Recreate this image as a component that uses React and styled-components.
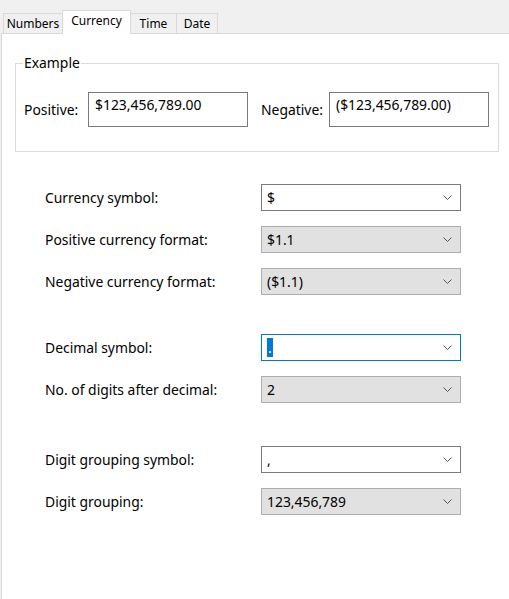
import React from "react";
import styled, { createGlobalStyle, css } from "styled-components";

const Global = createGlobalStyle`
  html, body { margin: 0; padding: 0; background: #f0f0f0; }
  body { font-family: "Noto Sans", "Open Sans", Arial, sans-serif; color: #000; }
  #root { width: 509px; height: 599px; overflow: hidden; }
`;

const Window = styled.div`
  width: 509px;
  height: 599px;
  display: flex;
  flex-direction: column;
  background: #f0f0f0;
`;

const TabStrip = styled.div`
  height: 33px;
  display: flex;
  align-items: flex-end;
  padding-left: 3px;
  box-sizing: border-box;
`;

const Tab = styled.div`
  box-sizing: border-box;
  width: ${(p) => p.$w}px;
  height: 20px;
  border: 1px solid #d9d9d9;
  border-bottom: none;
  border-left-width: ${(p) => (p.$first ? "1px" : "0")};
  background: #f0f0f0;
  font-size: 12px;
  line-height: 19px;
  text-align: center;
  white-space: nowrap;
  ${(p) =>
    p.$active &&
    css`
      height: 24px;
      margin-bottom: -1px;
      background: #fff;
      border-left-width: 1px;
      border-right-width: 1px;
      margin-left: -1px;
      line-height: 20px;
      position: relative;
      z-index: 1;
    `}
`;

const Panel = styled.div`
  flex: 1;
  margin-left: 1px;
  background: #fff;
  border-top: 1px solid #d9d9d9;
  border-left: 1px solid #d9d9d9;
  padding: 20px 0 0 13px;
  font-size: 13.9px;
`;

const GroupBox = styled.fieldset`
  width: 484px;
  box-sizing: border-box;
  height: 98px;
  margin: 0;
  padding: 20px 0 0 8px;
  border: 1px solid #dcdcdc;
  display: flex;
  align-items: flex-start;
`;

const Legend = styled.legend`
  padding: 0 1px;
  margin-left: -1px;
  font-size: 13.9px;
  line-height: 18px;
`;

const ExampleItem = styled.div`
  display: flex;
  align-items: center;
  margin-right: ${(p) => p.$gap || 0}px;
`;

const ExampleLabel = styled.div`
  width: ${(p) => p.$w}px;
  line-height: 20px;
`;

const SampleBox = styled.div`
  box-sizing: border-box;
  width: 160px;
  height: 35px;
  border: 1px solid #7a7a7a;
  padding: 2px 6px;
  line-height: 20px;
`;

const Section = styled.div`
  display: grid;
  grid-template-columns: 216px 200px;
  row-gap: ${(p) => p.$gap || 15}px;
  margin-top: ${(p) => p.$top}px;
  padding-left: 30px;
  align-items: center;
`;

const Label = styled.div`
  line-height: 20px;
`;

const Combo = styled.div`
  box-sizing: border-box;
  height: 27px;
  display: flex;
  align-items: center;
  justify-content: space-between;
  padding: 0 8px 0 5px;
  border: 1px solid #7a7a7a;
  background: #fff;
  line-height: 20px;
  ${(p) =>
    p.$variant === "grey" &&
    css`
      background: #e1e1e1;
      border-color: #adadad;
    `}
  ${(p) =>
    p.$variant === "focus" &&
    css`
      border-color: #0078d7;
    `}
`;

const Selected = styled.span`
  background: #0078d7;
  color: #fff;
  padding: 0 1px;
  line-height: 19px;
`;

const Chevron = () => (
  <svg width="9" height="5" viewBox="0 0 9 5" style={{ display: "block" }}>
    <polyline points="0.5,0.5 4.5,4.5 8.5,0.5" fill="none" stroke="#555" strokeWidth="1" />
  </svg>
);

const Row = ({ label, value, variant }) => (
  <>
    <Label>{label}</Label>
    <Combo $variant={variant}>
      <span>{value}</span>
      <Chevron />
    </Combo>
  </>
);

export default function App() {
  return (
    <Window>
      <Global />
      <TabStrip>
        <Tab $first $w={60}>Numbers</Tab>
        <Tab $active $w={69}>Currency</Tab>
        <Tab $w={46}>Time</Tab>
        <Tab $w={41}>Date</Tab>
      </TabStrip>
      <Panel>
        <GroupBox>
          <Legend>Example</Legend>
          <ExampleItem $gap={13}>
            <ExampleLabel $w={64}>Positive:</ExampleLabel>
            <SampleBox>$123,456,789.00</SampleBox>
          </ExampleItem>
          <ExampleItem>
            <ExampleLabel $w={68}>Negative:</ExampleLabel>
            <SampleBox>($123,456,789.00)</SampleBox>
          </ExampleItem>
        </GroupBox>

        <Section $top={32}>
          <Row label="Currency symbol:" value="$" />
          <Row label="Positive currency format:" value="$1.1" variant="grey" />
          <Row label="Negative currency format:" value="($1.1)" variant="grey" />
        </Section>

        <Section $top={39}>
          <Label>Decimal symbol:</Label>
          <Combo $variant="focus">
            <Selected>.</Selected>
            <Chevron />
          </Combo>
          <Row label="No. of digits after decimal:" value="2" variant="grey" />
        </Section>

        <Section $top={43}>
          <Row label="Digit grouping symbol:" value="," />
          <Row label="Digit grouping:" value="123,456,789" variant="grey" />
        </Section>
      </Panel>
    </Window>
  );
}
